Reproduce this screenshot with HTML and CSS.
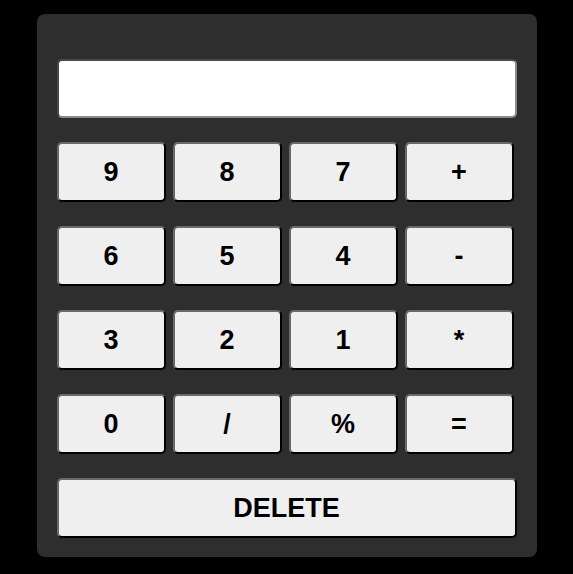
FILE: index.html
```html
<!DOCTYPE html>
<html>
<head>
<meta charset="utf-8">
<link rel="stylesheet" href="styles.css">
</head>
<body>
<div class="calc">
  <input class="display" type="text">
  <div class="keys">
    <button class="key">9</button>
    <button class="key">8</button>
    <button class="key">7</button>
    <button class="key">+</button>
    <button class="key">6</button>
    <button class="key">5</button>
    <button class="key">4</button>
    <button class="key">-</button>
    <button class="key">3</button>
    <button class="key">2</button>
    <button class="key">1</button>
    <button class="key">*</button>
    <button class="key">0</button>
    <button class="key">/</button>
    <button class="key">%</button>
    <button class="key">=</button>
  </div>
  <button class="key delete">DELETE</button>
</div>
</body>
</html>
```
FILE: styles.css
```css
html, body {
  margin: 0;
  padding: 0;
  background: #000;
}
body {
  padding-top: 14px;
  font-family: "Liberation Sans", Arial, sans-serif;
}
.calc {
  box-sizing: border-box;
  width: 500px;
  height: 543px;
  margin: 0 auto;
  padding: 45px 20px 19px;
  background: #2e2e2e;
  border-radius: 8px;
  display: flex;
  flex-direction: column;
}
.display {
  box-sizing: border-box;
  width: 460px;
  height: 59px;
  margin: 0;
  background: #fff;
  border: 2px solid;
  border-color: #4a4a4a #8a8a8a #8a8a8a #4a4a4a;
  border-radius: 5px;
  outline: none;
}
.keys {
  margin-top: 24px;
  width: 457px;
  display: grid;
  grid-template-columns: repeat(4, 109px);
  grid-auto-rows: 60px;
  column-gap: 7px;
  row-gap: 24px;
}
.key {
  box-sizing: border-box;
  margin: 0;
  padding: 0;
  background: #efefef;
  border: 2px solid;
  border-color: #6a6a6a #000 #000 #6a6a6a;
  border-radius: 5px;
  font-family: "Liberation Sans", Arial, sans-serif;
  font-weight: bold;
  font-size: 27px;
  color: #000;
}
.delete {
  margin-top: 24px;
  width: 460px;
  height: 60px;
}
```
